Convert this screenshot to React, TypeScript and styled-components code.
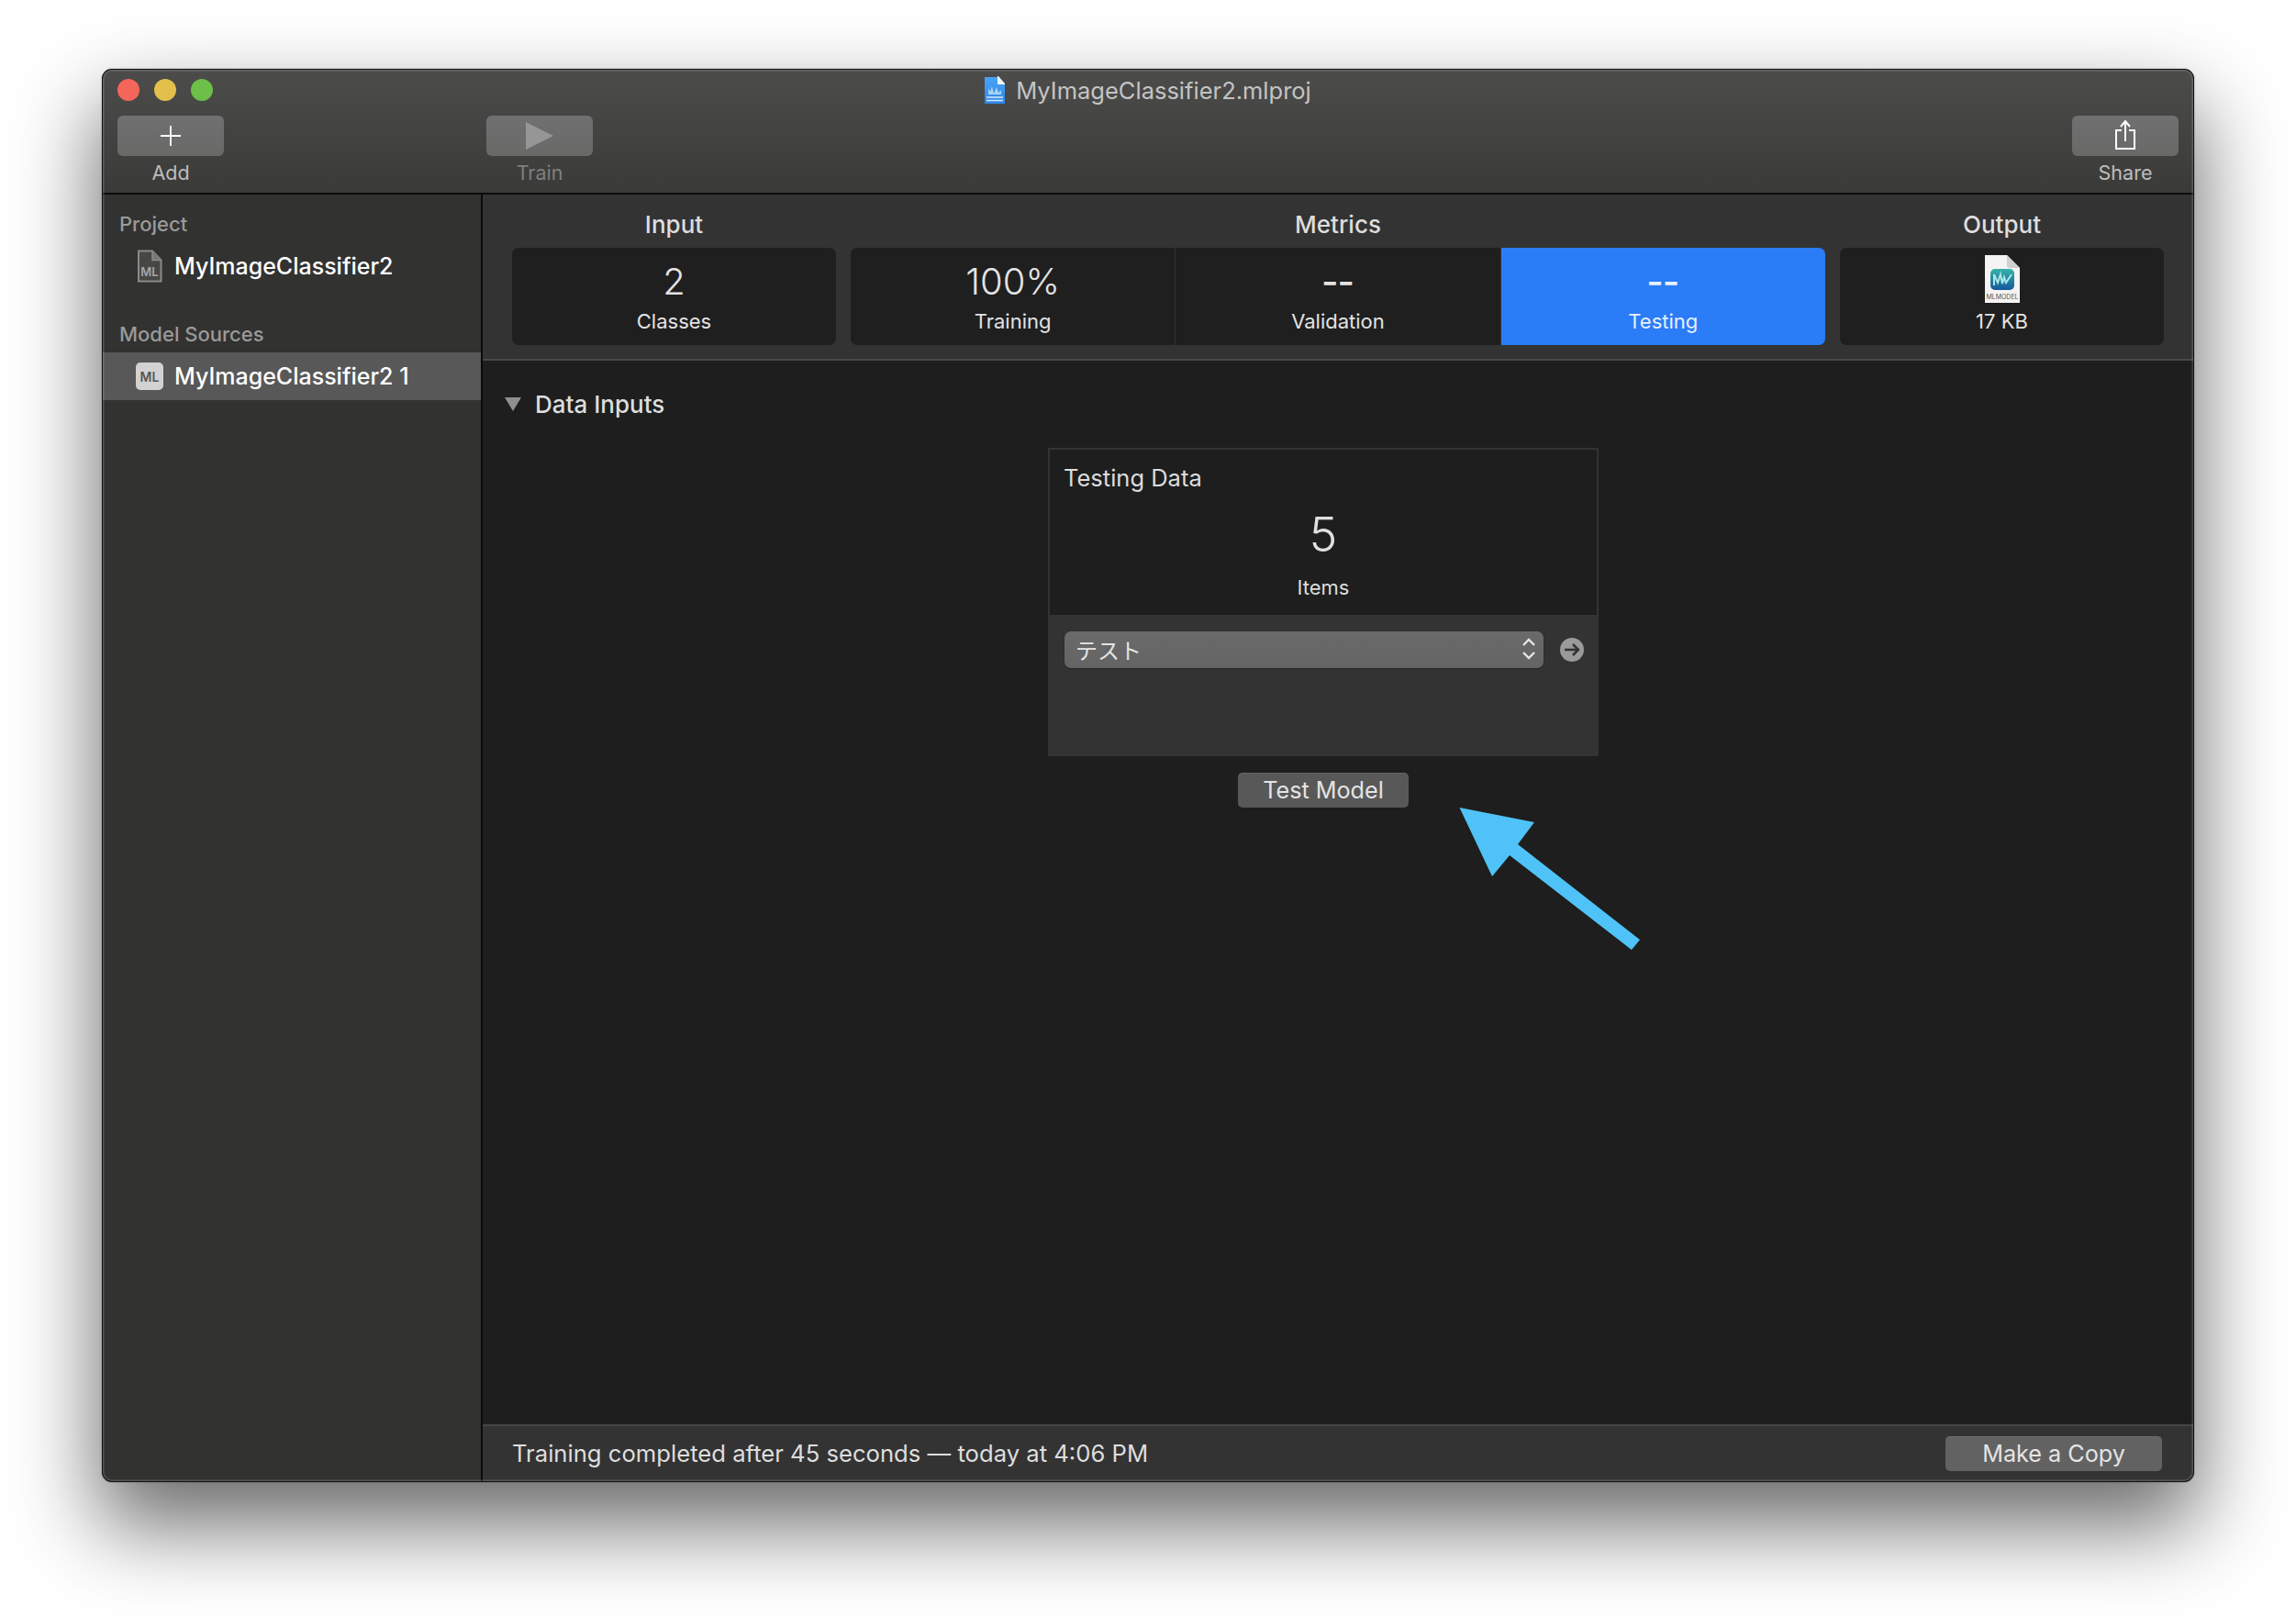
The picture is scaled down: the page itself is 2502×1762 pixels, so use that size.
import React from "react";
import styled, { createGlobalStyle } from "styled-components";

const GlobalStyle = createGlobalStyle`
  html, body {
    margin: 0;
    padding: 0;
    background: #ffffff;
  }
  * {
    box-sizing: border-box;
  }
`;

const FONT = `Inter, "Noto Sans CJK JP", "Liberation Sans", sans-serif`;

const Page = styled.div`
  width: 2502px;
  height: 1762px;
  padding: 75px 111px;
  background: #ffffff;
  font-family: ${FONT};
  overflow: hidden;
`;

const Window = styled.div`
  position: relative;
  width: 2280px;
  height: 1540px;
  display: flex;
  flex-direction: column;
  border-radius: 11px;
  overflow: hidden;
  background: #323231;
`;

const WindowShadow = styled.div`
  border-radius: 11px;
  width: 2280px;
  height: 1540px;
  box-shadow: 0 44px 92px 4px rgba(0, 0, 0, 0.58), 0 0 2px rgba(0, 0, 0, 0.35);
`;

// thin light ring inside the black hairline of the window edge
const WindowEdge = styled.div`
  position: absolute;
  inset: 0;
  border-radius: 11px;
  pointer-events: none;
  box-shadow: inset 0 0 0 1px #111, inset 0 0 0 2.5px rgba(255, 255, 255, 0.17);
`;

const TitleBar = styled.header`
  height: 137px;
  flex: none;
  border-bottom: 2px solid #0c0c0c;
  background: linear-gradient(#4c4c4b, #3a3a39);
`;

const TitleRow = styled.div`
  height: 46px;
  display: grid;
  grid-template-columns: 1fr auto 1fr;
  align-items: center;
  padding: 0 17px;
`;

const Lights = styled.div`
  display: flex;
  gap: 16px;
`;

const Light = styled.span<{ $color: string }>`
  width: 24px;
  height: 24px;
  border-radius: 50%;
  background: ${({ $color }) => $color};
`;

const Title = styled.div`
  display: flex;
  align-items: center;
  gap: 12px;
  font-size: 25.5px;
  color: #c4c4c3;
`;

const Toolbar = styled.div`
  display: flex;
  gap: 286px;
  padding: 5px 17px 0;
`;

const ToolItem = styled.div<{ $end?: boolean }>`
  width: 116px;
  display: flex;
  flex-direction: column;
  align-items: center;
  margin-left: ${({ $end }) => ($end ? "auto" : "0")};
`;

const ToolButton = styled.div`
  width: 116px;
  height: 44px;
  display: flex;
  align-items: center;
  justify-content: center;
  border-radius: 6px;
  background: linear-gradient(#707070, #696968);
`;

const ToolLabel = styled.span<{ $off?: boolean }>`
  margin-top: 5px;
  font-size: 21.5px;
  line-height: 26px;
  color: ${({ $off }) => ($off ? "#7f7f7e" : "#bdbdbc")};
`;

const Main = styled.div`
  flex: 1;
  display: flex;
  min-height: 0;
`;

const Sidebar = styled.aside`
  width: 415px;
  flex: none;
  padding-top: 18px;
  border-right: 2px solid #0a0a0a;
  background: #323231;
`;

const SideHeading = styled.div`
  height: 28px;
  margin-bottom: 6px;
  padding-left: 19px;
  font-size: 22px;
  line-height: 28px;
  font-weight: 500;
  color: #9a9a99;
`;

const SideRow = styled.div<{ $active?: boolean }>`
  height: 52px;
  display: flex;
  align-items: center;
  gap: 12px;
  padding-left: 37px;
  margin-bottom: ${({ $active }) => ($active ? "0" : "34px")};
  font-size: 25px;
  font-weight: 500;
  color: #ffffff;
  background: ${({ $active }) => ($active ? "#585858" : "transparent")};
`;

const Badge = styled.span`
  width: 30px;
  height: 30px;
  display: flex;
  align-items: center;
  justify-content: center;
  border-radius: 5px;
  font-size: 14px;
  font-weight: 600;
  color: #555555;
  background: #d2d2d2;
`;

const Content = styled.section`
  flex: 1;
  min-width: 0;
  display: flex;
  flex-direction: column;
`;

const Summary = styled.div`
  height: 181px;
  flex: none;
  display: grid;
  grid-template-columns: 353px 1062px 353px;
  gap: 16px;
  padding: 13px 33px 0 32px;
  border-bottom: 2px solid #484848;
  background: #333333;
`;

const Group = styled.div`
  display: flex;
  flex-direction: column;
`;

const GroupTitle = styled.div`
  height: 45px;
  display: flex;
  align-items: center;
  justify-content: center;
  padding-bottom: 6px;
  font-size: 26px;
  font-weight: 500;
  color: #dddddd;
`;

const Tiles = styled.div`
  height: 106px;
  display: flex;
  border-radius: 7px;
  overflow: hidden;
`;

const Tile = styled.div<{ $selected?: boolean }>`
  flex: 1;
  position: relative;
  display: flex;
  flex-direction: column;
  align-items: center;
  color: ${({ $selected }) => ($selected ? "#e8f0ff" : "#e3e3e3")};
  background: ${({ $selected }) => ($selected ? "#2a7cf7" : "#1f1f1f")};
  & + & {
    border-left: 1.5px solid #333333;
  }
`;

const TileValue = styled.div`
  height: 66px;
  display: flex;
  align-items: center;
  justify-content: center;
  padding-top: 6px;
  font-size: 40px;
  font-weight: 300;
`;

const TileDash = styled(TileValue)`
  letter-spacing: -1px;
  font-weight: 500;
  font-size: 40px;
  padding-top: 6px;
  padding-right: 1px;
`;

const TileIcon = styled.div`
  height: 66px;
  display: flex;
  justify-content: center;
  padding-top: 8px;
`;

const TileLabel = styled.div`
  font-size: 22px;
  line-height: 28px;
`;

const DataArea = styled.div`
  position: relative;
  flex: 1;
  display: flex;
  flex-direction: column;
  background: #1e1e1e;
`;

const Disclosure = styled.div`
  height: 95px;
  flex: none;
  display: flex;
  align-items: center;
  gap: 15px;
  padding: 0 0 0 24px;
  font-size: 26px;
  font-weight: 500;
  color: #dddddd;
`;

const Triangle = styled.span`
  width: 0;
  height: 0;
  border-left: 9px solid transparent;
  border-right: 9px solid transparent;
  border-top: 15px solid #8f8f8f;
`;

const Center = styled.div`
  display: flex;
  flex-direction: column;
  align-items: center;
  padding-right: 33px;
`;

const Card = styled.div`
  width: 600px;
  height: 336px;
  display: flex;
  flex-direction: column;
  background: #333333;
`;

const CardTop = styled.div`
  height: 182px;
  flex: none;
  display: flex;
  flex-direction: column;
  align-items: center;
  padding: 15px 15px 0;
  border: 2px solid #333333;
  border-bottom: none;
  background: #1e1e1e;
`;

const CardTitle = styled.div`
  align-self: flex-start;
  font-size: 25.5px;
  line-height: 32px;
  color: #dcdcdc;
`;

const CardCount = styled.div`
  margin-top: 16px;
  font-size: 52px;
  line-height: 60px;
  font-weight: 300;
  color: #e0e0e0;
`;

const CardUnit = styled.div`
  margin-top: 13px;
  font-size: 22px;
  line-height: 28px;
  color: #dcdcdc;
`;

const CardControls = styled.div`
  display: flex;
  align-items: center;
  gap: 18px;
  padding: 18px 0 0 18px;
`;

const Select = styled.div`
  width: 522px;
  height: 40px;
  display: flex;
  align-items: center;
  justify-content: space-between;
  padding: 0 8px 2px 12px;
  border-radius: 7px;
  font-size: 24px;
  color: #e4e4e4;
  background: linear-gradient(#6a6a6a, #646464);
  box-shadow: 0 1px 2px rgba(0, 0, 0, 0.3);
`;

const Button = styled.div<{ $width: number; $bg: string }>`
  width: ${({ $width }) => $width}px;
  height: 38px;
  display: flex;
  align-items: center;
  justify-content: center;
  border-radius: 5px;
  font-size: 25.2px;
  color: #e4e4e4;
  background: ${({ $bg }) => $bg};
  box-shadow: inset 0 1px 0 rgba(255, 255, 255, 0.08);
`;

const TestButtonWrap = styled.div`
  margin-top: 18px;
`;

const CalloutArrow = styled.svg`
  position: absolute;
  left: 1059px;
  top: 487px;
  width: 210px;
  height: 160px;
`;

const StatusBar = styled.footer`
  height: 63px;
  flex: none;
  display: flex;
  align-items: center;
  justify-content: space-between;
  padding: 0 35px 2px 32px;
  border-top: 2px solid #454545;
  font-size: 25.65px;
  color: #dedede;
  background: #333333;
`;

function PlusIcon() {
  return (
    <svg width="24" height="24" viewBox="0 0 24 24">
      <path d="M12 1v22M1 12h22" stroke="#fff" strokeWidth="1.8" fill="none" />
    </svg>
  );
}

function PlayIcon() {
  return (
    <svg width="30" height="30" viewBox="0 0 30 30">
      <path d="M0 0 30 15 0 30z" fill="#969696" />
    </svg>
  );
}

function ShareIcon() {
  return (
    <svg width="26" height="34" viewBox="0 0 26 34">
      <path
        d="M9 11H3v20h20V11h-6M13 23V2M8 7l5-6 5 6"
        stroke="#fff"
        strokeWidth="2"
        fill="none"
      />
    </svg>
  );
}

function ProjectFileIcon() {
  return (
    <svg width="30" height="36" viewBox="-1 0 30 36">
      <path
        d="M2 1.5h15l9.500 10V34.500H2z"
        fill="#474746"
        stroke="#8a8a89"
        strokeWidth="2"
      />
      <path d="M17 1.500v10h9.500" fill="#777" stroke="#8a8a89" strokeWidth="1.500" />
      <text
        x="14"
        y="29"
        textAnchor="middle"
        fontSize="13"
        fontWeight="600"
        fontFamily="Inter, sans-serif"
        fill="#a8a8a8"
      >
        ML
      </text>
    </svg>
  );
}

function TitleDocIcon() {
  return (
    <svg width="22" height="30" viewBox="0 0 22 30">
      <defs>
        <linearGradient id="titleDoc" x1="0" y1="0" x2="0" y2="1">
          <stop offset="0" stopColor="#4aa3f5" />
          <stop offset="1" stopColor="#2f86e8" />
        </linearGradient>
      </defs>
      <path d="M0 1h14l8 8v21H0z" fill="url(#titleDoc)" />
      <path d="M14 0h1l7 8v1h-8z" fill="#f0f6fd" />
      <path d="M4 20V13l2 4 2-6 2 8 3-7 2 6 3-3v5z" fill="#a9d3f7" />
      <path d="M2 23h18M2 26.500h18" stroke="#d8ebfb" strokeWidth="1.500" />
    </svg>
  );
}

function ModelFileIcon() {
  return (
    <svg width="38" height="52" viewBox="0 0 38 52">
      <defs>
        <linearGradient id="modelBadge" x1="0" y1="0" x2="0" y2="1">
          <stop offset="0" stopColor="#37b3a6" />
          <stop offset="1" stopColor="#14589c" />
        </linearGradient>
      </defs>
      <path d="M0 0h24l14 14v38H0z" fill="#f4f4f4" />
      <path d="M24 0l14 14H27a3 3 0 0 1-3-3z" fill="#d0d0d0" />
      <rect x="6" y="15" width="26" height="23" rx="5" fill="url(#modelBadge)" />
      <path
        d="M10 33V21l4 9 3-9 2 10 2-7 2 6 6-9"
        stroke="#a9e6ea"
        strokeWidth="2"
        fill="none"
      />
      <text
        x="19"
        y="48"
        textAnchor="middle"
        fontSize="7"
        fontFamily="Inter, sans-serif"
        fill="#555"
      >
        MLMODEL
      </text>
    </svg>
  );
}

function ChevronsIcon() {
  return (
    <svg width="16" height="26" viewBox="0 0 16 26">
      <path
        d="M2 9l6-6 6 6M2 17l6 6 6-6"
        stroke="#e6e6e6"
        strokeWidth="2.400"
        fill="none"
      />
    </svg>
  );
}

function GoIcon() {
  return (
    <svg width="26" height="26" viewBox="0 0 26 26">
      <circle cx="13" cy="13" r="13" fill="#9a9a9a" />
      <path
        d="M5 13h15M14 7l6 6-6 6"
        stroke="#333"
        strokeWidth="2.500"
        fill="none"
      />
    </svg>
  );
}

export default function App() {
  return (
    <Page>
      <GlobalStyle />
      <WindowShadow>
        <Window>
          <TitleBar>
            <TitleRow>
              <Lights>
                <Light $color="#f4665a" />
                <Light $color="#e3bf4b" />
                <Light $color="#6cbf49" />
              </Lights>
              <Title>
                <TitleDocIcon />
                MyImageClassifier2.mlproj
              </Title>
            </TitleRow>
            <Toolbar>
              <ToolItem>
                <ToolButton>
                  <PlusIcon />
                </ToolButton>
                <ToolLabel>Add</ToolLabel>
              </ToolItem>
              <ToolItem>
                <ToolButton>
                  <PlayIcon />
                </ToolButton>
                <ToolLabel $off>Train</ToolLabel>
              </ToolItem>
              <ToolItem $end>
                <ToolButton>
                  <ShareIcon />
                </ToolButton>
                <ToolLabel>Share</ToolLabel>
              </ToolItem>
            </Toolbar>
          </TitleBar>
          <Main>
            <Sidebar>
              <SideHeading>Project</SideHeading>
              <SideRow>
                <ProjectFileIcon />
                MyImageClassifier2
              </SideRow>
              <SideHeading>Model Sources</SideHeading>
              <SideRow $active>
                <Badge>ML</Badge>
                MyImageClassifier2 1
              </SideRow>
            </Sidebar>
            <Content>
              <Summary>
                <Group>
                  <GroupTitle>Input</GroupTitle>
                  <Tiles>
                    <Tile>
                      <TileValue>2</TileValue>
                      <TileLabel>Classes</TileLabel>
                    </Tile>
                  </Tiles>
                </Group>
                <Group>
                  <GroupTitle>Metrics</GroupTitle>
                  <Tiles>
                    <Tile>
                      <TileValue>100%</TileValue>
                      <TileLabel>Training</TileLabel>
                    </Tile>
                    <Tile>
                      <TileDash>--</TileDash>
                      <TileLabel>Validation</TileLabel>
                    </Tile>
                    <Tile $selected>
                      <TileDash>--</TileDash>
                      <TileLabel>Testing</TileLabel>
                    </Tile>
                  </Tiles>
                </Group>
                <Group>
                  <GroupTitle>Output</GroupTitle>
                  <Tiles>
                    <Tile>
                      <TileIcon>
                        <ModelFileIcon />
                      </TileIcon>
                      <TileLabel>17 KB</TileLabel>
                    </Tile>
                  </Tiles>
                </Group>
              </Summary>
              <DataArea>
                <Disclosure>
                  <Triangle />
                  Data Inputs
                </Disclosure>
                <Center>
                  <Card>
                    <CardTop>
                      <CardTitle>Testing Data</CardTitle>
                      <CardCount>5</CardCount>
                      <CardUnit>Items</CardUnit>
                    </CardTop>
                    <CardControls>
                      <Select>
                        テスト
                        <ChevronsIcon />
                      </Select>
                      <GoIcon />
                    </CardControls>
                  </Card>
                  <TestButtonWrap>
                    <Button $width={186} $bg="#585858">
                      Test Model
                    </Button>
                  </TestButtonWrap>
                </Center>
                <CalloutArrow viewBox="0 0 210 160">
                  <path
                    d="M5.500 0 87 16 69 40 202 144 193 155 60 52 41 75z"
                    fill="#4fc3f7"
                  />
                </CalloutArrow>
              </DataArea>
              <StatusBar>
                Training completed after 45 seconds — today at 4:06 PM
                <Button $width={236} $bg="#626262">
                  Make a Copy
                </Button>
              </StatusBar>
            </Content>
          </Main>
          <WindowEdge />
        </Window>
      </WindowShadow>
    </Page>
  );
}
